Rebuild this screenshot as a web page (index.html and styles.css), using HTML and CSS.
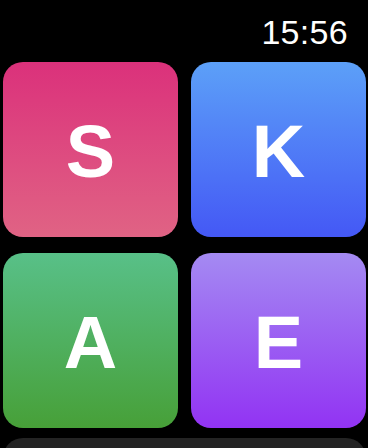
FILE: index.html
```html
<!DOCTYPE html>
<html>
<head>
<meta charset="utf-8">
<link rel="stylesheet" href="styles.css">
</head>
<body>
<div class="screen">
  <header class="status"><span class="time">15:56</span></header>
  <main class="grid">
    <div class="tile pink">S</div>
    <div class="tile blue">K</div>
    <div class="tile green">A</div>
    <div class="tile purple">E</div>
  </main>
  <div class="bar"></div>
</div>
</body>
</html>
```
FILE: styles.css
```css
html, body {
  margin: 0;
  padding: 0;
  background: #000;
}
.screen {
  width: 368px;
  height: 448px;
  overflow: hidden;
  background: #000;
  font-family: "Liberation Sans", Arial, sans-serif;
}
.status {
  height: 62px;
  box-sizing: border-box;
  padding: 15px 20px 0 0;
  display: flex;
  justify-content: flex-end;
}
.time {
  color: #fff;
  font-size: 34px;
  line-height: 34px;
  letter-spacing: 0.3px;
}
.grid {
  display: grid;
  grid-template-columns: 175px 175px;
  grid-auto-rows: 175px;
  column-gap: 13px;
  row-gap: 16px;
  padding-left: 3px;
}
.tile {
  border-radius: 20px;
  display: flex;
  align-items: center;
  justify-content: center;
  box-sizing: border-box;
  padding-top: 4px;
  color: #fff;
  font-weight: 700;
  font-size: 74px;
  line-height: 1;
}
.pink { background: linear-gradient(to bottom, #db317b, #e06384); }
.blue { background: linear-gradient(to bottom, #5ca0f8, #4458f5); }
.green { background: linear-gradient(to bottom, #58c088, #47a038); }
.purple { background: linear-gradient(to bottom, #a48af2, #9233f3); }
.bar {
  margin: 10px 2px 0 3px;
  height: 60px;
  border-radius: 20px;
  background: #242424;
}
```
